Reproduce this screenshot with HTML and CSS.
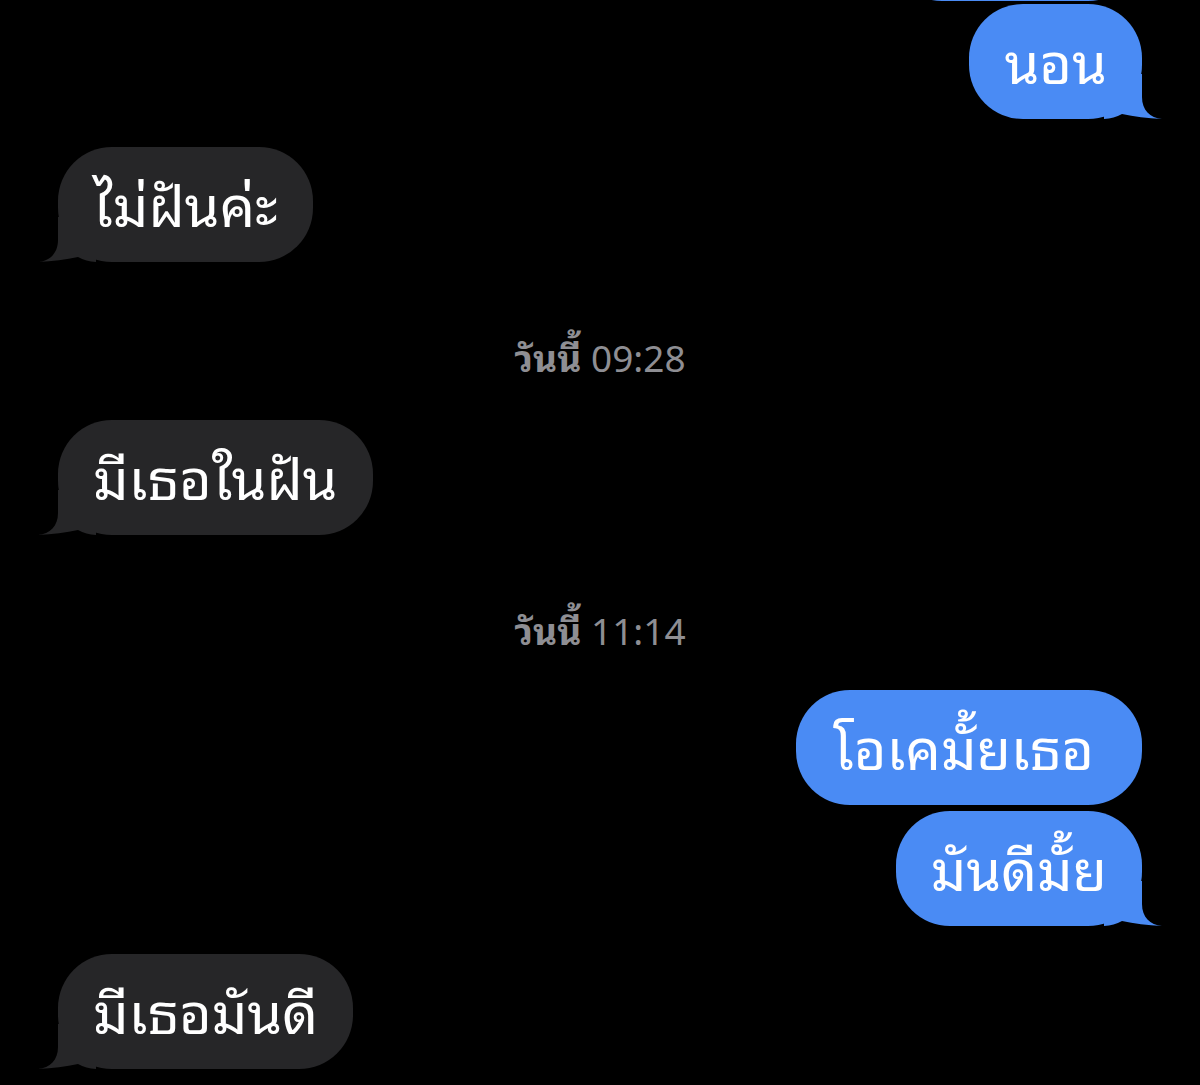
FILE: index.html
```html
<!DOCTYPE html>
<html lang="th">
<head>
<meta charset="utf-8">
<title>Messages</title>
<link rel="stylesheet" href="styles.css">
</head>
<body>
<main class="chat">
  <div class="bubble out ghost"></div>
  <div class="bubble out tail m-3">นอน</div>
  <div class="bubble in tail m-28">ไม่ฝันค่ะ</div>
  <div class="stamp"><b>วันนี้</b> 09:28</div>
  <div class="bubble in tail m-44">มีเธอในฝัน</div>
  <div class="stamp"><b>วันนี้</b> 11:14</div>
  <div class="bubble out wide m-41">โอเคมั้ยเธอ</div>
  <div class="bubble out tail m-6">มันดีมั้ย</div>
  <div class="bubble in tail m-28">มีเธอมันดี</div>
</main>
</body>
</html>
```

FILE: styles.css
```css
html, body {
  margin: 0;
  padding: 0;
  background: #000;
}
body {
  width: 1200px;
  height: 1085px;
  overflow: hidden;
  font-family: "Noto Sans Thai Looped", "Noto Sans Thai", "Thonburi", "Loma", "Garuda", "Noto Sans", "DejaVu Sans", sans-serif;
}
.chat {
  display: flex;
  flex-direction: column;
  padding: 0 58px;
}
.bubble {
  position: relative;
  height: 115px;
  line-height: 110px;
  padding: 0 35px;
  border-radius: 54px;
  font-size: 56px;
  color: #fff;
  white-space: nowrap;
  box-sizing: border-box;
}
.bubble.out {
  align-self: flex-end;
  background: #4a8bf4;
}
.bubble.in {
  align-self: flex-start;
  background: #262628;
}
.bubble.wide {
  padding-left: 37px;
  padding-right: 48px;
}
.ghost {
  width: 254px;
  margin-top: -114px;
}
.m-3 { margin-top: 3px; }
.m-6 { margin-top: 6px; }
.m-28 { margin-top: 28px; }
.m-41 { margin-top: 41px; }
.m-44 { margin-top: 44px; }

/* tails */
.bubble.tail::before {
  content: "";
  position: absolute;
  bottom: 0;
  width: 58px;
  height: 45px;
}
.bubble.out.tail::before {
  right: -20px;
  background: #4a8bf4;
  clip-path: path("M 0 0 L 38 0 L 38 23 C 38 36, 46 44, 58 45 Q 36 44, 18 40 Q 10 44.5, 0 45 Z");
}
.bubble.in.tail::before {
  left: -20px;
  background: #262628;
  clip-path: path("M 58 0 L 20 0 L 20 23 C 20 36, 12 44, 0 45 Q 22 44, 40 40 Q 48 44.5, 58 45 Z");
}

.stamp {
  align-self: center;
  height: 40px;
  line-height: 40px;
  margin: 74px 0 0;
  color: #8e8e93;
  font-size: 37px;
  font-family: "Noto Sans Thai Looped", "Noto Sans Thai", "Liberation Sans", "DejaVu Sans", sans-serif;
}
.stamp b {
  font-weight: 700;
}
```
